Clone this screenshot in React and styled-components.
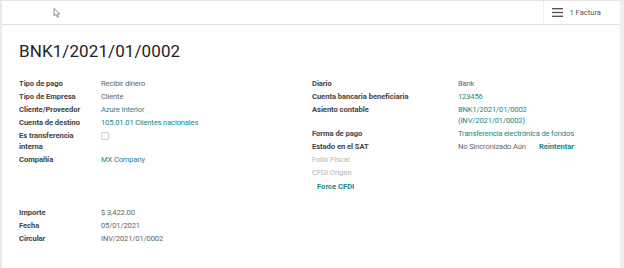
import React from "react";
import styled, { createGlobalStyle } from "styled-components";

const GlobalStyle = createGlobalStyle`
  html, body {
    margin: 0;
    padding: 0;
    background: #ffffff;
    font-family: Roboto, "Noto Sans", Arial, sans-serif;
  }
`;

const Frame = styled.div`
  width: 624px;
  height: 268px;
  box-sizing: border-box;
  border-top: 1px solid #e6e6e6;
  border-left: 2px solid #e9e9e9;
  border-right: 4px solid #efefef;
  display: flex;
  flex-direction: column;
  overflow: hidden;
`;

const TopBar = styled.div`
  height: 23px;
  flex: none;
  display: flex;
  align-items: stretch;
  justify-content: space-between;
  border-bottom: 1px solid #e2e2e2;
  position: relative;
`;

const Cursor = styled.svg`
  position: absolute;
  left: 51px;
  top: 7px;
`;

const StatButton = styled.div`
  display: flex;
  align-items: center;
  gap: 6px;
  padding: 0 19px 0 8px;
  margin-left: auto;
  border-left: 1px solid #ececec;
  font-size: 7.6px;
  color: #555;
`;

const Sheet = styled.div`
  flex: 1;
  padding: 15px 17px 0 17px;
`;

const Title = styled.h1`
  margin: 0 0 15px 0;
  font-size: 17px;
  font-weight: 400;
  color: #1f2226;
  letter-spacing: 0.1px;
  line-height: 22px;
`;

const Columns = styled.div`
  display: grid;
  grid-template-columns: 293px 1fr;
`;

const FieldGroup = styled.div`
  display: grid;
  grid-template-columns: ${(p) => p.labelWidth}px 1fr;
  grid-auto-rows: minmax(13px, auto);
  align-content: start;
  font-size: 7.6px;
  line-height: 11px;
`;

const Label = styled.div`
  color: ${(p) => (p.muted ? "#b4b4b4" : "#444")};
  font-weight: ${(p) => (p.muted ? 400 : 700)};
  letter-spacing: -0.05px;
  padding: 1px 0;
`;

const Value = styled.div`
  color: ${(p) => (p.link ? "#17878a" : "#666")};
  letter-spacing: -0.15px;
  padding: 1px 0;
  display: flex;
  gap: 13px;
`;

const Retry = styled.span`
  color: #17878a;
  font-weight: 700;
  letter-spacing: -0.05px;
`;

const Checkbox = styled.span`
  display: inline-block;
  width: 6px;
  height: 6px;
  border: 1px solid #cfcfcf;
  border-radius: 1px;
  margin-top: 2px;
`;

const ForceButton = styled.div`
  grid-column: 1 / span 2;
  margin: 2px 0 0 5px;
  color: #17878a;
  font-weight: 700;
  font-size: 7.6px;
`;

const BottomGroup = styled(FieldGroup)`
  margin-top: 14px;
`;

const Bars = () => (
  <svg width="11" height="9" viewBox="0 0 11 9">
    <rect x="0" y="0" width="11" height="1.4" fill="#555" />
    <rect x="0" y="3.8" width="11" height="1.4" fill="#555" />
    <rect x="0" y="7.6" width="11" height="1.4" fill="#555" />
  </svg>
);

const leftFields = [
  { label: "Tipo de pago", value: "Recibir dinero" },
  { label: "Tipo de Empresa", value: "Cliente" },
  { label: "Cliente/Proveedor", value: "Azure Interior", link: true },
  { label: "Cuenta de destino", value: "105.01.01 Clientes nacionales", link: true },
  { label: "Es transferencia interna", checkbox: true },
  { label: "Compañía", value: "MX Company", link: true },
];

const rightFields = [
  { label: "Diario", value: "Bank" },
  { label: "Cuenta bancaria beneficiaria", value: "123456", link: true },
  { label: "Asiento contable", value: "BNK1/2021/01/0002 (INV/2021/01/0002)", link: true, wrap: true },
  { label: "Forma de pago", value: "Transferencia electrónica de fondos", link: true },
  { label: "Estado en el SAT", value: "No Sincronizado Aún", retry: true },
  { label: "Folio Fiscal", muted: true },
  { label: "CFDI Origen", muted: true },
];

const bottomFields = [
  { label: "Importe", value: "$ 3,422.00" },
  { label: "Fecha", value: "05/01/2021" },
  { label: "Circular", value: "INV/2021/01/0002" },
];

const renderFields = (fields) =>
  fields.map((f) => (
    <React.Fragment key={f.label}>
      <Label muted={f.muted}>
        {f.label === "Es transferencia interna" ? (
          <>
            Es transferencia
            <br />
            interna
          </>
        ) : (
          f.label
        )}
      </Label>
      <Value link={f.link}>
        {f.checkbox ? (
          <Checkbox />
        ) : f.wrap ? (
          <span>
            BNK1/2021/01/0002
            <br />
            (INV/2021/01/0002)
          </span>
        ) : (
          f.value
        )}
        {f.retry && <Retry>Reintentar</Retry>}
      </Value>
    </React.Fragment>
  ));

export default function App() {
  return (
    <>
      <GlobalStyle />
      <Frame>
        <TopBar>
          <Cursor width="8" height="10" viewBox="0 0 8 10">
            <path d="M1 0.5 L1 8 L3 6.3 L4.4 9.3 L5.6 8.8 L4.3 5.9 L6.8 5.8 Z" fill="#fff" stroke="#777" strokeWidth="0.8" />
          </Cursor>
          <StatButton>
            <Bars />
            <span>1 Factura</span>
          </StatButton>
        </TopBar>
        <Sheet>
          <Title>BNK1/2021/01/0002</Title>
          <Columns>
            <FieldGroup labelWidth={82}>{renderFields(leftFields)}</FieldGroup>
            <FieldGroup labelWidth={146}>
              {renderFields(rightFields)}
              <ForceButton>Force CFDI</ForceButton>
            </FieldGroup>
          </Columns>
          <BottomGroup labelWidth={82}>{renderFields(bottomFields)}</BottomGroup>
        </Sheet>
      </Frame>
    </>
  );
}
